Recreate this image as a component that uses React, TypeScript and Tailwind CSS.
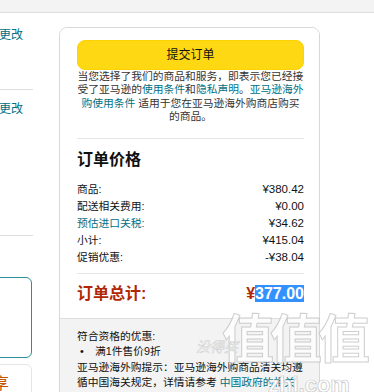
const rows = [
  { label: "商品:", value: "¥380.42" },
  { label: "配送相关费用:", value: "¥0.00" },
  { label: "预估进口关税:", value: "¥34.62", link: true },
  { label: "小计:", value: "¥415.04" },
  { label: "促销优惠:", value: "-¥38.04" },
];

export default function App() {
  return (
    <div className="relative w-[374px] h-[392px] overflow-hidden bg-white text-[#0f1111] [font-family:'Liberation_Sans','Noto_Sans_CJK_SC',sans-serif]">
      {/* top strip */}
      <div className="h-[13px] bg-[#f3f3f3] border-b border-[#dddddd]" />

      <div className="flex">
        {/* left column, clipped */}
        <div className="w-[33px] shrink-0 overflow-hidden">
          <div className="h-[76px] pt-[14px] -ml-[1px] text-[12px] leading-[16px] text-[#007185] whitespace-nowrap">
            更改
          </div>
          <div className="h-[146px] border-t border-[#dddddd] pt-[11px] -ml-[1px] text-[12px] leading-[16px] text-[#007185] whitespace-nowrap">
            更改
          </div>
          <div className="border-t border-[#dddddd] w-[33px]" />
          <div className="mt-[41px] -ml-[8px] w-[40px] h-[81px] border border-[#2a8f98] rounded-[6px]" />
          <div className="mt-[6px] -ml-[8px] w-[40px] h-[40px] border border-[#e3e6e6] rounded-[6px] pt-[10px] pl-[0px] text-[16px] leading-[18px] text-[#c45500] overflow-hidden">
            享
          </div>
        </div>

        {/* checkout panel */}
        <div className="ml-[26px] mt-[14px] w-[261px] shrink-0 border border-[#d5d9d9] rounded-[8px] overflow-hidden">
          <div className="pl-[17px] pr-[15px] pt-[12px] pb-[14px] bg-white">
            <button className="w-full h-[30px] rounded-[8px] bg-[#ffd814] border border-[#fcd200] text-[12px] text-[#0f1111]">
              提交订单
            </button>
            <p className="text-[10.75px] leading-[13.4px] text-center text-[#333333] whitespace-nowrap">
              当您选择了我们的商品和服务，即表示您已经接
              <br />
              受了亚马逊的<span className="text-[#007185]">使用条件</span>和
              <span className="text-[#007185]">隐私声明</span>。
              <span className="text-[#007185]">亚马逊海外</span>
              <br />
              <span className="text-[#007185]">购使用条件</span> 适用于您在亚马逊海外购商店购买
              <br />
              的商品。
            </p>
            <div className="mt-[14px] h-px bg-[#e7e7e7]" />
            <h2 className="mt-[11px] text-[16px] leading-[20px] font-bold">订单价格</h2>
            <div className="mt-[11px] text-[10.75px] leading-[17px]">
              {rows.map((r) => (
                <div key={r.label} className="flex justify-between">
                  <span className={r.link ? "text-[#007185]" : "text-[#0f1111]"}>{r.label}</span>
                  <span className="text-[11.5px]">{r.value}</span>
                </div>
              ))}
            </div>
            <div className="mt-[7px] h-px bg-[#e7e7e7]" />
            <div className="mt-[10px] flex justify-between items-center text-[16px] leading-[20px] font-bold text-[#b12704]">
              <span>订单总计:</span>
              <span>
                ¥<span className="bg-[#3390ff] text-white">377.00</span>
              </span>
            </div>
          </div>
          <div className="border-t border-[#dddddd] bg-[#f3f3f3] pl-[17px] pr-[15px] pt-[10px] pb-[20px] text-[10.75px] leading-[15.6px] text-[#0f1111] whitespace-nowrap">
            <div>符合资格的优惠:</div>
            <div className="flex">
              <span className="w-[18px] pl-[3px]">•</span>
              <span>满1件售价9折</span>
            </div>
            <div>亚马逊海外购提示：亚马逊海外购商品清关均遵</div>
            <div>
              循中国海关规定，详情请参考 <span className="text-[#007185]">中国政府的相关</span>
            </div>
            <div className="text-[#007185]">规定。</div>
          </div>
        </div>
      </div>

      {/* watermark overlay */}
      <div className="absolute left-[222px] top-[306px] pointer-events-none select-none opacity-80">
        <div className="text-[52px] leading-[60px] font-bold tracking-[-4px] text-white [-webkit-text-stroke:1px_#c4c4c4] [font-family:'Noto_Sans_CJK_SC',sans-serif]">
          值值值
        </div>
      </div>
      <div className="absolute left-[196px] top-[336px] pointer-events-none text-[14px] italic text-white [-webkit-text-stroke:0.5px_#cfcfcf] [font-family:'Noto_Sans_CJK_SC',sans-serif]">
        没得买
      </div>
      <div className="absolute left-[268px] top-[368px] pointer-events-none text-[22px] font-bold text-white [-webkit-text-stroke:0.7px_#c8c8c8] [font-family:'Liberation_Sans',sans-serif]">
        zhi.com
      </div>
    </div>
  );
}
